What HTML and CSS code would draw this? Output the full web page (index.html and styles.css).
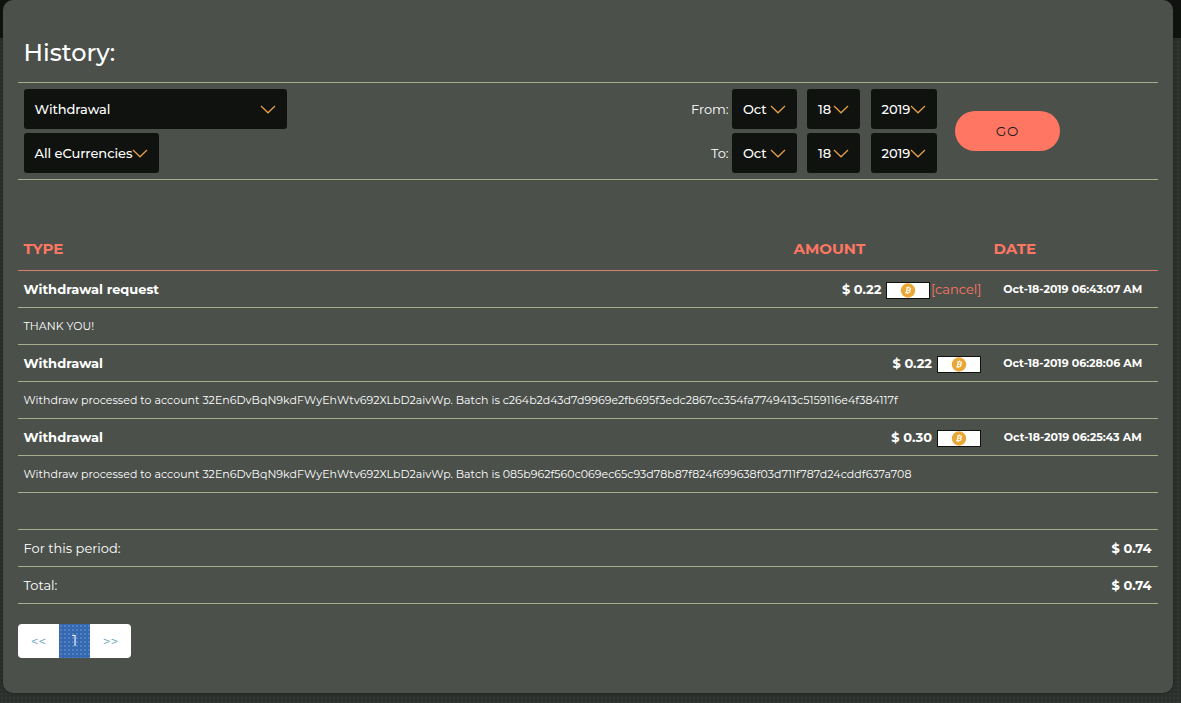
FILE: index.html
```html
<!DOCTYPE html>
<html lang="en">

<head>
    <meta charset="UTF-8">
    <meta name="viewport" content="width=device-width, initial-scale=1.0">
    <title>History</title>
    <link rel="stylesheet" href="styles.css">
</head>

<body>
    <svg class="sprite" width="0" height="0">
        <symbol id="arrow" viewBox="0 0 16 9">
            <path d="M1 1 L8 7.8 L15 1" fill="none" stroke="#e8a04c" stroke-width="1.2" />
        </symbol>
        <symbol id="btc" viewBox="0 0 16 16">
            <circle cx="8" cy="8.5" r="7.2" fill="#e9a736" />
            <path d="M7.2 5.8 L6.2 10.8 M6.2 5.8 H9 Q10.8 6 10.4 7.2 Q10 8.2 8.6 8.2 H6.8 M8.6 8.2 Q10.2 8.5 9.9 9.6 Q9.5 10.8 8 10.8 H5 M8.5 4.6 L8.2 5.8 M7.5 10.8 L7.2 12" fill="none" stroke="#fff" stroke-width="1.1" />
        </symbol>
    </svg>

    <div class="panel">
        <h3 class="title">History:</h3>

        <form class="filter">
            <div class="kinds">
                <div class="select wide"><span>Withdrawal</span><svg class="arrow"><use href="#arrow" /></svg></div>
                <div class="select currency"><span>All eCurrencies</span><svg class="arrow"><use href="#arrow" /></svg></div>
            </div>
            <div class="dates">
                <div class="date-row">
                    <label>From:</label>
                    <div class="select month"><span>Oct</span><svg class="arrow"><use href="#arrow" /></svg></div>
                    <div class="select day"><span>18</span><svg class="arrow"><use href="#arrow" /></svg></div>
                    <div class="select year"><span>2019</span><svg class="arrow"><use href="#arrow" /></svg></div>
                </div>
                <div class="date-row">
                    <label>To:</label>
                    <div class="select month"><span>Oct</span><svg class="arrow"><use href="#arrow" /></svg></div>
                    <div class="select day"><span>18</span><svg class="arrow"><use href="#arrow" /></svg></div>
                    <div class="select year"><span>2019</span><svg class="arrow"><use href="#arrow" /></svg></div>
                </div>
            </div>
            <button type="button" class="btn">GO</button>
        </form>

        <table class="history">
            <colgroup>
                <col class="col-type">
                <col class="col-amount">
                <col class="col-date">
            </colgroup>
            <thead>
                <tr>
                    <th>TYPE</th>
                    <th>AMOUNT</th>
                    <th>DATE</th>
                </tr>
            </thead>
            <tbody>
                <tr>
                    <td><b>Withdrawal request</b></td>
                    <td class="amount">
                        <div class="pay"><b>$ 0.22</b><span class="coin"><svg><use href="#btc" /></svg></span><a class="cancel">[cancel]</a></div>
                    </td>
                    <td class="when"><b>Oct-18-2019 06:43:07 AM</b></td>
                </tr>
                <tr>
                    <td colspan="3" class="note">THANK YOU!</td>
                </tr>
                <tr>
                    <td><b>Withdrawal</b></td>
                    <td class="amount">
                        <div class="pay"><b>$ 0.22</b><span class="coin"><svg><use href="#btc" /></svg></span></div>
                    </td>
                    <td class="when"><b>Oct-18-2019 06:28:06 AM</b></td>
                </tr>
                <tr>
                    <td colspan="3" class="note">Withdraw processed to account 32En6DvBqN9kdFWyEhWtv692XLbD2aivWp. Batch is c264b2d43d7d9969e2fb695f3edc2867cc354fa7749413c5159116e4f384117f</td>
                </tr>
                <tr>
                    <td><b>Withdrawal</b></td>
                    <td class="amount">
                        <div class="pay"><b>$ 0.30</b><span class="coin"><svg><use href="#btc" /></svg></span></div>
                    </td>
                    <td class="when"><b>Oct-18-2019 06:25:43 AM</b></td>
                </tr>
                <tr>
                    <td colspan="3" class="note">Withdraw processed to account 32En6DvBqN9kdFWyEhWtv692XLbD2aivWp. Batch is 085b962f560c069ec65c93d78b87f824f699638f03d711f787d24cddf637a708</td>
                </tr>
                <tr>
                    <td colspan="3"></td>
                </tr>
                <tr>
                    <td colspan="2">For this period:</td>
                    <td class="sum"><b>$ 0.74</b></td>
                </tr>
                <tr>
                    <td colspan="2">Total:</td>
                    <td class="sum"><b>$ 0.74</b></td>
                </tr>
            </tbody>
        </table>

        <div class="pagination">
            <a class="step">&lt;&lt;</a>
            <a class="page">1</a>
            <a class="step">&gt;&gt;</a>
        </div>
    </div>
</body>

</html>
```
FILE: styles.css
```css
* {
    box-sizing: border-box;
}

body {
    margin: 0;
    height: 703px;
    overflow: hidden;
    font-family: Montserrat, Inter, "Open Sans", sans-serif;
    font-size: 13px;
    color: #fff;
    background: linear-gradient(#0f120f 38px, transparent 38px), radial-gradient(circle, #363b38 0.6px, transparent 0.9px) 0 0 / 4px 4px, #2b302d;
}

.sprite {
    display: block;
}

.panel {
    width: 1170px;
    height: 693px;
    margin-left: 3px;
    padding: 0 15px;
    border-radius: 10px;
    background: #4b504b;
    box-shadow: 0 0 3px #151815;
}

.title {
    margin: 0;
    height: 82px;
    padding: 37px 0 0 5.5px;
    font-size: 24px;
    line-height: 32px;
    font-weight: 500;
}

/* 筛选 */
.filter {
    display: flex;
    height: 98px;
    padding: 6px 6px 0;
    border-top: 1px solid #a9ac8c;
    border-bottom: 1px solid #a9ac8c;
    font-weight: 500;
    letter-spacing: -0.06px;
}

.kinds {
    width: 656px;
    display: flex;
    flex-direction: column;
    gap: 4px;
}

.select {
    display: flex;
    align-items: center;
    justify-content: space-between;
    height: 40px;
    padding: 0 11px 0 10.5px;
    border-radius: 3px;
    background: #0f120f;
    white-space: nowrap;
}

.arrow {
    flex: none;
    width: 16px;
    height: 9px;
}

.wide {
    width: 263px;
}

.currency {
    width: 135px;
}

.dates {
    display: flex;
    flex-direction: column;
    gap: 4px;
}

.date-row {
    display: flex;
    align-items: center;
    height: 40px;
}

.date-row label {
    width: 49px;
    margin-right: 3px;
    padding-right: 0.5px;
    text-align: right;
    white-space: nowrap;
    font-weight: 400;
}

.month {
    width: 65px;
    margin-right: 10px;
    padding-left: 11px;
}

.day {
    width: 53px;
    margin-right: 11px;
    padding-left: 11px;
}

.year {
    width: 66px;
}

.btn {
    width: 105px;
    height: 40px;
    margin: 22px 0 0 18px;
    border: none;
    border-radius: 20px;
    background: #ff7663;
    color: #1b1b1b;
    font-family: inherit;
    font-size: 13.5px;
    letter-spacing: 0.9px;
}

/* 列表 */
.history {
    width: 1140px;
    margin-top: 48px;
    border-collapse: separate;
    border-spacing: 0;
    table-layout: fixed;
}

.col-type {
    width: 770px;
}

.col-amount {
    width: 200px;
}

.col-date {
    width: 170px;
}

.history th {
    height: 43px;
    padding: 0 5.5px 2px;
    border-bottom: 1px solid #d9816f;
    color: #ff7663;
    font-size: 15px;
    font-weight: 700;
    text-align: left;
}

.history td {
    height: 37px;
    padding: 0 6.5px 0 5.5px;
    border-bottom: 1px solid #a9ac8c;
    white-space: nowrap;
}

.history .note {
    font-size: 11px;
    letter-spacing: 0.03px;
}

.history .amount {
    padding-right: 7px;
}

.pay {
    display: flex;
    align-items: center;
    justify-content: flex-end;
}

.coin {
    display: flex;
    align-items: center;
    justify-content: center;
    width: 44px;
    height: 17px;
    margin: 2px 0 0 5px;
    border: 1px solid #0f120f;
    background: #fff;
}

.coin svg {
    width: 16px;
    height: 16px;
}

.cancel {
    margin: 0 -0.5px 0 0.5px;
    color: #ff7663;
}

.history .when {
    padding: 0 0.5px 0 0;
    text-align: center;
    font-size: 11px;
}

.history .sum {
    text-align: right;
}

.pagination {
    display: flex;
    width: 113px;
    height: 34px;
    margin-top: 20px;
    border-radius: 4px;
    overflow: hidden;
    background: #fff;
    line-height: 34px;
    text-align: center;
}

.step {
    width: 41px;
    color: #4d93b5;
    font-size: 13.5px;
}

.page {
    width: 31px;
    background: radial-gradient(circle, #5f8fce 0.6px, transparent 0.9px) 0 0 / 4px 4px, #3568b0;
    font-size: 14px;
}
```
